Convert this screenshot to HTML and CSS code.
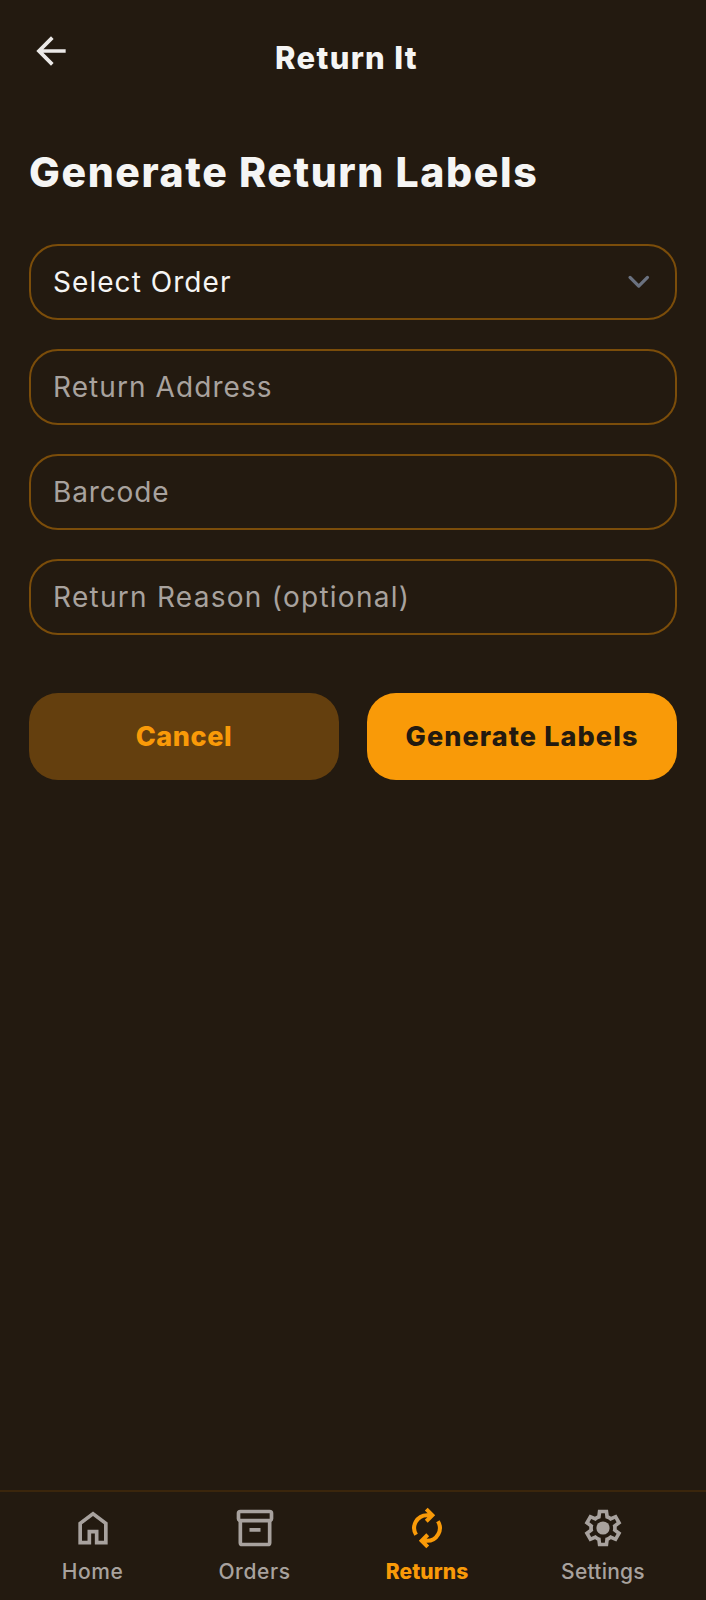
FILE: index.html
```html
<!DOCTYPE html>
<html lang="en">
<head>
<meta charset="utf-8">
<title>Return It</title>
<link rel="stylesheet" href="styles.css">
</head>
<body>
<div class="app">
  <header class="topbar">
    <svg class="icon back" viewBox="0 0 24 24"><path d="M7.825 13l5.6 5.6L12 20l-8-8 8-8 1.425 1.4L7.825 11H20v2Z"/></svg>
    <h1 class="title"><span>Return It</span></h1>
  </header>
  <main class="content">
    <h2 class="heading"><span>Generate Return Labels</span></h2>
    <form class="fields">
      <div class="field select"><span class="t-select">Select Order</span>
        <svg class="chevron" viewBox="0 0 20 20"><path d="M6 8l4 4 4-4"/></svg>
      </div>
      <div class="field"><span class="t-address">Return Address</span></div>
      <div class="field"><span class="t-barcode">Barcode</span></div>
      <div class="field"><span class="t-reason">Return Reason (optional)</span></div>
    </form>
    <div class="actions">
      <button class="btn cancel"><span>Cancel</span></button>
      <button class="btn primary"><span>Generate Labels</span></button>
    </div>
  </main>
  <nav class="tabs">
    <a class="tab home"><svg class="icon" viewBox="0 0 24 24"><path d="M6 19h3v-6h6v6h3v-9l-6-4.5L6 10Zm-2 2V9l8-6 8 6v12h-7v-6h-2v6Z"/></svg><span>Home</span></a>
    <a class="tab orders"><svg class="icon" viewBox="0 0 24 24"><path fill-rule="evenodd" d="M4 2h16a2 2 0 0 1 2 2v3q0 1.1-1 1.7V20a2 2 0 0 1-2 2H5a2 2 0 0 1-2-2V8.700q-1-.6-1-1.700V4a2 2 0 0 1 2-2ZM5 9v11h14V9ZM4 4v3h16V4ZM9 12h6v2H9Z"/></svg><span>Orders</span></a>
    <a class="tab returns"><svg class="icon stroke" viewBox="0 0 24 24"><path d="M6.060 15.700A7 7 0 0 1 12 5h2.800M11.600 1.700 14.900 5l-3.300 3.300M17.940 8.300A7 7 0 0 1 12 19H9.200M12.400 15.700 9.100 19l3.300 3.300"/></svg><span>Returns</span></a>
    <a class="tab settings"><svg class="icon" viewBox="0 0 24 24"><path fill-rule="evenodd" d="m9.250 22-.4-3.200q-.325-.125-.612-.3-.288-.175-.563-.375L4.700 19.375l-2.750-4.750 2.575-1.950Q4.500 12.500 4.500 12.337v-.675q0-.162.025-.337L1.950 9.375l2.750-4.750 2.975 1.250q.275-.2.575-.375.3-.175.6-.3l.4-3.200h5.500l.4 3.200q.325.125.613.3.287.175.562.375l2.975-1.250 2.750 4.750-2.575 1.950q.025.175.025.337v.675q0 .163-.05.338l2.575 1.950-2.750 4.750-2.950-1.250q-.275.2-.575.375-.3.175-.6.3l-.4 3.200ZM11 20h1.975l.35-2.650q.775-.2 1.438-.588.662-.387 1.212-.937l2.475 1.025.975-1.700-2.150-1.625q.125-.35.175-.738.05-.387.05-.787t-.05-.788q-.05-.387-.175-.737l2.150-1.625-.975-1.700-2.475 1.050q-.55-.575-1.212-.963-.663-.387-1.438-.587L13 4h-1.975l-.35 2.650q-.775.2-1.437.587-.663.388-1.213.938L5.550 7.150l-.975 1.700 2.150 1.600q-.125.375-.175.750-.05.375-.05.8 0 .4.05.775.05.375.175.750l-2.150 1.625.975 1.700 2.475-1.050q.55.575 1.213.962.662.388 1.437.588Z"/><circle cx="12" cy="12" r="3.600"/></svg><span>Settings</span></a>
  </nav>
</div>
</body>
</html>
```
FILE: styles.css
```css
* { box-sizing: border-box; }
body { margin: 0; background: #231a10; font-family: Inter, "Liberation Sans", sans-serif; }
.app { display: flex; flex-direction: column; height: 1600px; color: #f5f5f4; }
.icon { display: block; width: 44px; height: 44px; fill: currentColor; }
.topbar { display: flex; height: 116px; padding: 29px 29px 0; }
.back { color: #ebe9e7; }
.title { flex: 1; margin: 7px 57px 0 0; text-align: center; font-size: 31px; line-height: 44px; font-weight: 800; letter-spacing: 1.300px; }
.content { flex: 1; padding: 29px; }
.heading { margin: 0; height: 99px; font-size: 41px; line-height: 54px; font-weight: 800; letter-spacing: 1.600px; white-space: nowrap; }
.fields { display: flex; flex-direction: column; gap: 29px; }
.field { display: flex; align-items: center; justify-content: space-between; height: 76px; padding: 0 15px 0 22px; border: 2px solid #7b4d0a; border-radius: 29px; color: #a8a29e; font-size: 28px; white-space: nowrap; }
.field span { padding-bottom: 1px; }
.field.select { color: #f5f5f4; }
.t-select { letter-spacing: 1.050px; }
.t-address { letter-spacing: 1.080px; }
.t-barcode { letter-spacing: 0.850px; }
.t-reason { letter-spacing: 1.270px; }
.chevron { width: 43.500px; height: 43.500px; fill: none; stroke: #6b7280; stroke-width: 1.500; stroke-linecap: round; stroke-linejoin: round; }
.actions { display: grid; grid-template-columns: 1fr 1fr; gap: 28px; margin-top: 58px; }
.btn { height: 87px; padding: 0; border: 0; border-radius: 29px; font: 800 27px Inter, "Liberation Sans", sans-serif; }
.cancel { background: #643f0e; color: #f99a08; letter-spacing: 0.600px; }
.primary { background: #f99a08; color: #231a10; letter-spacing: 1.100px; }
.tabs { display: flex; height: 110px; padding: 14px 36px 0; border-top: 2px solid #3b260c; justify-content: space-between; color: #a8a29e; }
.tab { display: flex; flex-direction: column; align-items: center; font-size: 21px; line-height: 28px; font-weight: 500; gap: 8px; }
.stroke { fill: none; stroke: currentColor; stroke-width: 2.200; }
.home { width: 113px; letter-spacing: 0.600px; }
.orders { width: 127px; letter-spacing: 0.600px; }
.returns { width: 134px; color: #f99a08; font-weight: 800; letter-spacing: 0.100px; }
.settings { width: 134px; letter-spacing: 0.250px; }
```
